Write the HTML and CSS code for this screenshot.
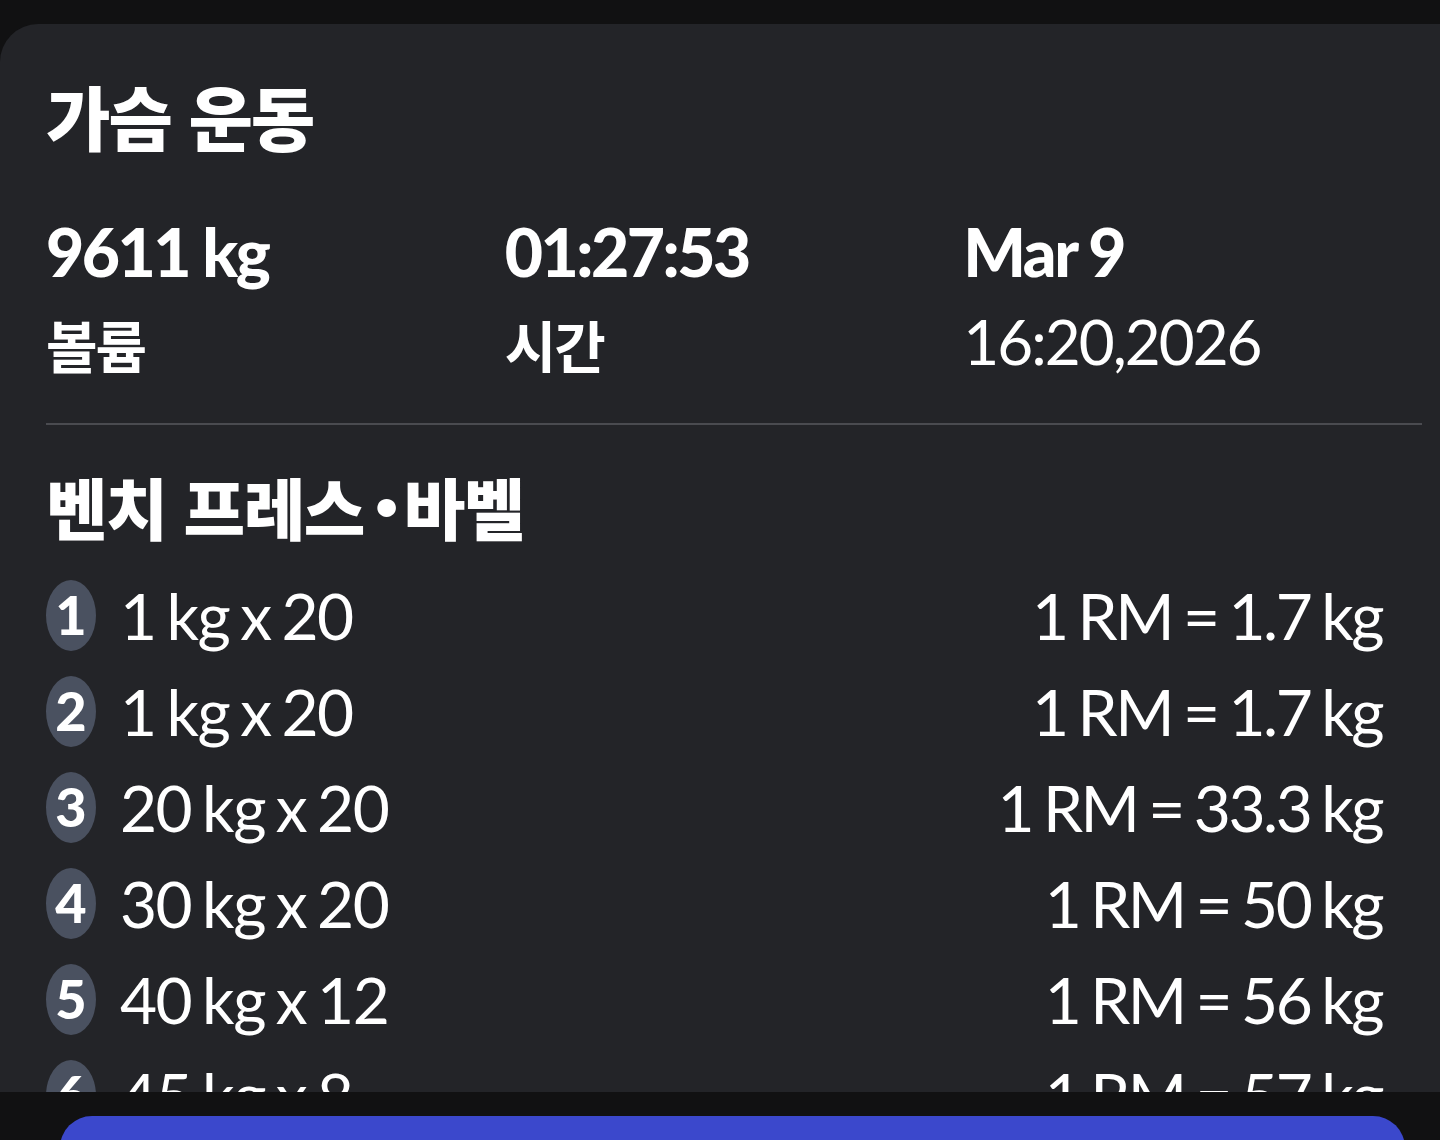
FILE: index.html
```html
<!DOCTYPE html>
<html lang="ko">
<head>
<meta charset="utf-8">
<title>가슴 운동</title>
<link rel="stylesheet" href="styles.css">
</head>
<body>
<div class="screen">
  <main class="card">
    <h1 class="title">가슴 운동</h1>
    <section class="stats">
      <div class="stat">
        <div class="stat-value">9611 kg</div>
        <div class="stat-label">볼륨</div>
      </div>
      <div class="stat">
        <div class="stat-value">01:27:53</div>
        <div class="stat-label">시간</div>
      </div>
      <div class="stat">
        <div class="stat-value">Mar 9</div>
        <div class="stat-date">16:20,2026</div>
      </div>
    </section>
    <hr class="divider">
    <h2 class="exercise">벤치 프레스<span class="dot">·</span>바벨</h2>
    <ul class="sets">
      <li class="set"><span class="badge">1</span><span class="set-text">1 kg x 20</span><span class="rm">1 RM = 1.7 kg</span></li>
      <li class="set"><span class="badge">2</span><span class="set-text">1 kg x 20</span><span class="rm">1 RM = 1.7 kg</span></li>
      <li class="set"><span class="badge">3</span><span class="set-text">20 kg x 20</span><span class="rm">1 RM = 33.3 kg</span></li>
      <li class="set"><span class="badge">4</span><span class="set-text">30 kg x 20</span><span class="rm">1 RM = 50 kg</span></li>
      <li class="set"><span class="badge">5</span><span class="set-text">40 kg x 12</span><span class="rm">1 RM = 56 kg</span></li>
      <li class="set"><span class="badge">6</span><span class="set-text">45 kg x 8</span><span class="rm">1 RM = 57 kg</span></li>
    </ul>
  </main>
  <div class="bottom">
    <div class="action"></div>
  </div>
</div>
</body>
</html>
```

FILE: styles.css
```css
* { box-sizing: border-box; }
html, body {
  margin: 0;
  padding: 0;
  background: #111112;
}
body {
  font-family: Lato, "Noto Sans CJK KR", sans-serif;
  color: #ffffff;
}
.screen {
  width: 1440px;
  height: 1140px;
  display: flex;
  flex-direction: column;
  padding-top: 24px;
  overflow: hidden;
}
.card {
  flex: 1;
  min-height: 0;
  overflow: hidden;
  background: #232428;
  border-radius: 38px 0 0 0;
  padding: 0 18px 0 46px;
}
.title {
  margin: 0;
  padding-top: 47px;
  font-family: "Noto Sans CJK KR", sans-serif;
  font-weight: 900;
  font-size: 70px;
  line-height: 90px;
  letter-spacing: -2px;
}
.stats {
  display: grid;
  grid-template-columns: repeat(3, 1fr);
  margin-top: 51px;
}
.stat-value {
  font-family: Lato, sans-serif;
  font-weight: 900;
  font-size: 66px;
  line-height: 80px;
  letter-spacing: -2.5px;
}
.stat-label {
  margin-top: 12px;
  font-family: "Noto Sans CJK KR", sans-serif;
  font-weight: 700;
  font-size: 56px;
  line-height: 80px;
  letter-spacing: -2px;
}
.stat-date {
  margin-top: 9px;
  font-family: Lato, sans-serif;
  font-weight: 400;
  font-size: 62px;
  line-height: 80px;
  letter-spacing: -2px;
}
.divider {
  margin: 39px 0 0 0;
  border: 0;
  height: 2px;
  background: #4a4b50;
}
.exercise {
  margin: 0;
  padding-top: 36px;
  font-family: "Noto Sans CJK KR", sans-serif;
  font-weight: 900;
  font-size: 67px;
  line-height: 90px;
  letter-spacing: -1.5px;
}
.dot {
  font-family: Lato, sans-serif;
  font-weight: 900;
  font-size: 90px;
  line-height: 0;
  margin: 0 6px 0 10px;
}
.sets {
  list-style: none;
  margin: 16px 0 0 0;
  padding: 0 40px 0 0;
}
.set {
  display: flex;
  align-items: center;
  height: 96px;
}
.badge {
  flex: none;
  width: 50px;
  height: 71px;
  border-radius: 50%;
  background: #4a5160;
  display: flex;
  align-items: center;
  justify-content: center;
  font-family: Lato, sans-serif;
  font-weight: 900;
  font-size: 54px;
  line-height: 1;
}
.set-text {
  margin-left: 24px;
  font-size: 64px;
  font-weight: 400;
  letter-spacing: -1.5px;
  word-spacing: -4px;
  flex: 1;
}
.rm {
  font-size: 64px;
  font-weight: 400;
  letter-spacing: -2.5px;
  word-spacing: -3px;
}
.bottom {
  flex: none;
  height: 48px;
  padding: 24px 35px 0 60px;
  background: #111112;
}
.action {
  height: 60px;
  background: #3b48cc;
  border-radius: 32px 32px 0 0;
}
```
